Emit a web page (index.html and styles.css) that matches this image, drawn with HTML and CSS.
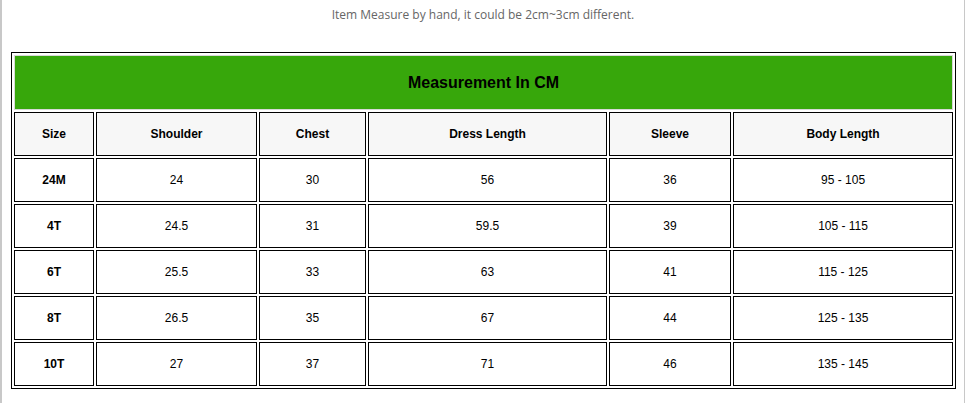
FILE: index.html
```html
<!DOCTYPE html>
<html>
<head>
<meta charset="utf-8">
<link rel="stylesheet" href="styles.css">
</head>
<body>
<div class="page">
  <p class="note">Item Measure by hand, it could be 2cm~3cm different.</p>
  <table class="size-table">
    <colgroup>
      <col class="c1">
      <col class="c2">
      <col class="c3">
      <col class="c4">
      <col class="c5">
      <col class="c6">
    </colgroup>
    <tr>
      <td class="title" colspan="6">Measurement In CM</td>
    </tr>
    <tr class="head">
      <th>Size</th>
      <th>Shoulder</th>
      <th>Chest</th>
      <th>Dress Length</th>
      <th>Sleeve</th>
      <th>Body Length</th>
    </tr>
    <tr><td class="size">24M</td><td>24</td><td>30</td><td>56</td><td>36</td><td>95 - 105</td></tr>
    <tr><td class="size">4T</td><td>24.5</td><td>31</td><td>59.5</td><td>39</td><td>105 - 115</td></tr>
    <tr><td class="size">6T</td><td>25.5</td><td>33</td><td>63</td><td>41</td><td>115 - 125</td></tr>
    <tr><td class="size">8T</td><td>26.5</td><td>35</td><td>67</td><td>44</td><td>125 - 135</td></tr>
    <tr><td class="size">10T</td><td>27</td><td>37</td><td>71</td><td>46</td><td>135 - 145</td></tr>
  </table>
</div>
</body>
</html>
```

FILE: styles.css
```css
html, body {
  margin: 0;
  padding: 0;
  background: #fff;
}

.page {
  box-sizing: border-box;
  width: 965px;
  height: 403px;
  border-left: 2px solid #c8c8c8;
  border-right: 1px solid #c8c8c8;
  overflow: hidden;
}

.note {
  margin: 6px 0 0;
  height: 18px;
  line-height: 18px;
  text-align: center;
  font-family: "Open Sans", sans-serif;
  font-size: 12px;
  color: #666;
}

.size-table {
  box-sizing: border-box;
  margin: 28px 0 0 9px;
  width: 945px;
  table-layout: fixed;
  border-collapse: separate;
  border-spacing: 2px;
  border: 1px solid #000;
  font-family: "Liberation Sans", Arial, sans-serif;
  font-size: 12px;
  color: #000;
}

.size-table td,
.size-table th {
  box-sizing: border-box;
  border: 1px solid #000;
  padding: 0;
  height: 44px;
  text-align: center;
  vertical-align: middle;
}

.size-table .title {
  height: 55px;
  background: #37a70b;
  border-color: #d8d8d8;
  font-size: 16px;
  font-weight: bold;
}

.size-table th {
  background: #f7f7f7;
  font-weight: bold;
}

.size-table .size {
  font-weight: bold;
}

.c1 { width: 80px; }
.c2 { width: 161px; }
.c3 { width: 107px; }
.c4 { width: 239px; }
.c5 { width: 122px; }
.c6 { width: 220px; }
```
